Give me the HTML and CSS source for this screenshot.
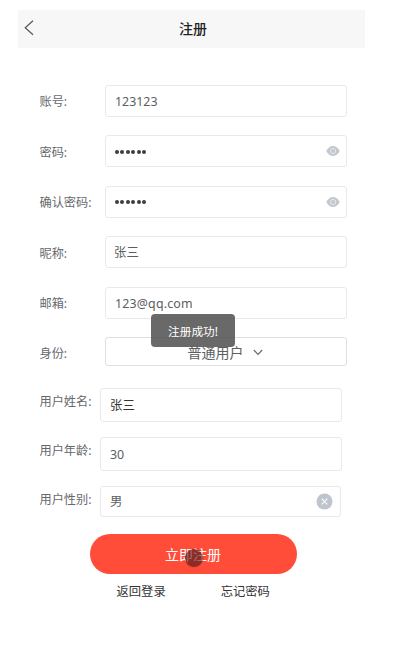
FILE: index.html
```html
<!DOCTYPE html>
<html lang="zh-CN">
<head>
<meta charset="utf-8">
<title>注册</title>
<link rel="stylesheet" href="styles.css">
</head>
<body>
<main class="page">
  <header class="bar">
    <svg class="back" width="10" height="16" viewBox="0 0 10 16"><path d="M9 .8 1.200 7.800 9 14.800"/></svg>
    <h1 class="title">注册</h1>
  </header>
  <form class="form">
    <div class="row"><span class="label">账号:</span><div class="input">123123</div></div>
    <div class="row"><span class="label">密码:</span><div class="input">
      <span class="dots"><i></i><i></i><i></i><i></i><i></i><i></i></span>
      <svg class="eye" width="14" height="12" viewBox="0 0 14 12"><path d="M.3 6C3.500-.8 10.500-.8 13.700 6 10.500 12.800 3.500 12.800.3 6Z"/><circle cx="7" cy="6" r="2.600"/></svg></div></div>
    <div class="row"><span class="label">确认密码:</span><div class="input">
      <span class="dots"><i></i><i></i><i></i><i></i><i></i><i></i></span>
      <svg class="eye" width="14" height="12" viewBox="0 0 14 12"><path d="M.3 6C3.500-.8 10.500-.8 13.700 6 10.500 12.800 3.500 12.800.3 6Z"/><circle cx="7" cy="6" r="2.600"/></svg></div></div>
    <div class="row"><span class="label">昵称:</span><div class="input cjk">张三</div></div>
    <div class="row"><span class="label">邮箱:</span><div class="input email">123@qq.com</div></div>
    <div class="row row-select"><span class="label">身份:</span><div class="input select">普通用户
      <svg class="chevron" width="10" height="7" viewBox="0 0 10 7"><path d="M.8 1 5 5.500 9.200 1"/></svg></div></div>
    <div class="row detail name"><span class="label">用户姓名:</span><div class="input dark">张三</div></div>
    <div class="row detail age"><span class="label">用户年龄:</span><div class="input">30</div></div>
    <div class="row detail sex"><span class="label">用户性别:</span><div class="input">男
      <svg class="clear" width="17" height="17" viewBox="0 0 17 17"><circle cx="8.500" cy="8.500" r="8"/><path d="m5.700 5.700 5.600 5.600m0-5.600-5.600 5.600"/></svg></div></div>
    <div class="submit">立即注册<span class="touch"></span></div>
    <nav class="links"><span>返回登录</span><span>忘记密码</span></nav>
  </form>
  <div class="toast">注册成功!</div>
</main>
</body>
</html>
```
FILE: styles.css
```css
* { box-sizing: border-box; }
body {
  margin: 0;
  background: #fff;
  color: #5c5e62;
  font-family: "Noto Sans", "Noto Sans CJK SC", sans-serif;
  font-size: 12.4px;
  line-height: 18px;
}
.page { position: relative; width: 413px; height: 663px; padding: 10px 0 0 18px; overflow: hidden; }
.bar {
  display: flex;
  align-items: center;
  width: 347px;
  height: 38px;
  padding-left: 6px;
  background: #f7f7f7;
}
.back { flex: none; margin-bottom: 3px; fill: none; stroke: #555; stroke-width: 1.2; }
.title {
  flex: 1;
  margin: 0 13px 0 0;
  text-align: center;
  font-size: 14px;
  font-weight: 500;
  color: #222;
}
.form { padding: 36px 0 0 21px; }
.row { display: flex; align-items: center; height: 33px; margin-bottom: 17.600px; }
.label { flex: none; width: 66px; padding: 3px 0 0 .5px; font-size: 12.200px; white-space: nowrap; color: #66686c; }
.input {
  display: flex;
  align-items: center;
  width: 242px;
  height: 32px;
  padding: 2px 6px 0 9px;
  border: 1px solid #e9e9e9;
  border-radius: 3px;
  background: #fff;
}
.cjk { padding-left: 8px; }
.email { letter-spacing: .18px; }
.dark { color: #333; }
.dots { display: flex; gap: 1.400px; margin-bottom: 1px; }
.dots i { width: 4px; height: 4px; border-radius: 50%; background: #3c3e42; }
.eye { margin: 0 0 2px auto; fill: #c3c8d0; }
.eye circle { fill: #c3c8d0; stroke: #e6e8eb; stroke-width: 1; }
.row-select { height: 29px; margin-bottom: 22.500px; }
.row-select .label { padding-top: 6px; }
.row-select .input { height: 29px; border-color: #dfdfdf; }
.select { justify-content: center; padding: 3px 2px 0 0; font-size: 14px; }
.chevron { margin: 0 0 1px 9px; fill: none; stroke: #666; stroke-width: 1.100; }
.detail .label { width: 61px; }
.detail { margin-bottom: 16px; }
.name .input { height: 34px; }
.name .label { padding-top: 0; padding-bottom: 6px; }
.age .input { height: 34px; }
.age .label { padding-top: 0; padding-bottom: 6px; }
.sex { height: 31px; margin-bottom: 17px; }
.sex .input { width: 241px; height: 31px; padding: 0 7px 0 9px; }
.sex .label { padding-top: 0; padding-bottom: 4px; }
.clear { margin-left: auto; fill: #bfc4cd; }
.clear path { fill: none; stroke: #fff; stroke-width: 1.100; }
.submit {
  position: relative;
  display: flex;
  align-items: center;
  justify-content: center;
  width: 207px;
  height: 40px;
  margin-left: 51px;
  padding: 2px 1px 0 0;
  border-radius: 20px;
  background: #ff4d3a;
  color: #fff;
  font-size: 14px;
}
.touch {
  position: absolute;
  left: 95px;
  top: 15px;
  width: 18px;
  height: 18px;
  border-radius: 50%;
  background: rgba(70, 20, 20, .6);
  box-shadow: 0 0 2px rgba(70, 20, 20, .4);
}
.links { display: flex; gap: 55px; padding: 9px 0 0 77.500px; color: #333; font-size: 12.300px; }
.toast {
  position: absolute;
  left: 151px;
  top: 314px;
  width: 84px;
  height: 33px;
  border-radius: 4px;
  background: rgba(80, 80, 80, .86);
  color: #fff;
  font-size: 11.700px;
  line-height: 34px;
  text-align: center;
}
```
